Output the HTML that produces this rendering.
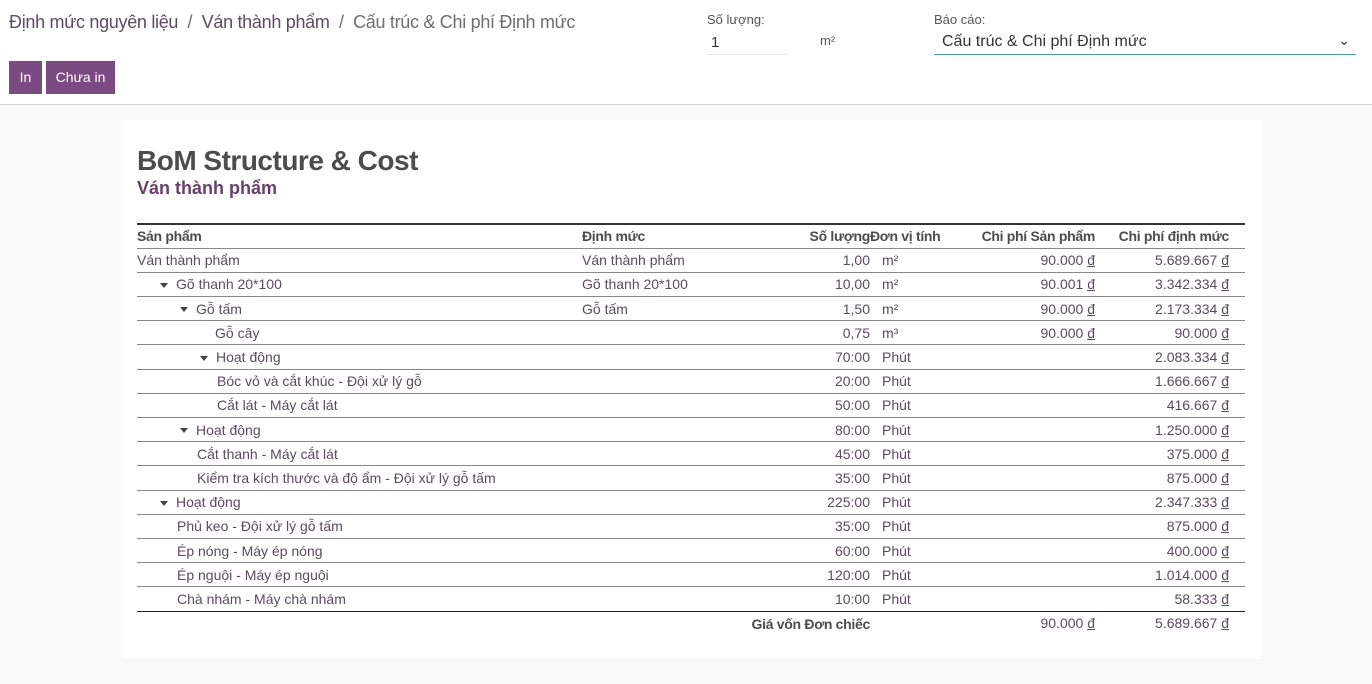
<!DOCTYPE html>
<html><head><meta charset="utf-8">
<style>
*{box-sizing:border-box;margin:0;padding:0}
body{width:1372px;height:684px;overflow:hidden;background:#f9f9f9;font-family:"Liberation Sans",sans-serif;color:#4c4c4c;position:relative}
.top{position:absolute;left:0;top:0;width:1372px;height:105px;background:#fff;border-bottom:1px solid #d8d8d8}
.bc{position:absolute;left:9px;top:12px;font-size:18px;color:#6e6e6e;white-space:nowrap;letter-spacing:-0.3px}
.bc a{color:#5e4a64}
.btn{position:absolute;top:61px;height:33px;background:#7c4a82;color:#fff;font-size:14px;line-height:33px;text-align:center}
.lbl{position:absolute;font-size:13px;color:#555}
.sheet{position:absolute;left:121px;top:120px;width:1140px;height:539px;background:#fff}
h1{position:absolute;left:137px;top:145px;font-size:28px;font-weight:bold;color:#4c4c4c;letter-spacing:-0.5px}
h2{position:absolute;left:137px;top:178px;font-size:18px;font-weight:bold;color:#6b3d6e}
table{position:absolute;left:137px;top:223px;width:1108px;border-collapse:collapse;font-size:14px;border-top:2px solid #333}
td,th{height:24.2px;padding:0;white-space:nowrap;color:#5b4b5e;font-weight:normal}
th{font-weight:bold;color:#4c4c4c;text-align:left;letter-spacing:-0.3px}
tr{border-bottom:1px solid #888}
tr.last{border-bottom:1px solid #222}
tr.tot{border:none}
.r{text-align:right}
.u{padding-left:12px}
.t{display:inline-block;width:0;height:0;border-left:4px solid transparent;border-right:4px solid transparent;border-top:5px solid #444;margin-right:8px;vertical-align:middle}
.d{text-decoration:underline}
</style></head><body>
<div class="top">
<div class="bc"><a>Định mức nguyên liệu</a> &nbsp;/&nbsp; <a>Ván thành phẩm</a> &nbsp;/&nbsp; Cấu trúc &amp; Chi phí Định mức</div>
<div class="btn" style="left:9px;width:33px">In</div>
<div class="btn" style="left:46px;width:69px">Chưa in</div>
<div class="lbl" style="left:707px;top:12px">Số lượng:</div>
<div style="position:absolute;left:707px;top:30px;width:80px;height:25px;border-bottom:1px solid #e4e4e4;font-size:15px;padding:4px 4px;color:#333">1</div>
<div class="lbl" style="left:820px;top:33px">m²</div>
<div class="lbl" style="left:934px;top:12px">Báo cáo:</div>
<div style="position:absolute;left:934px;top:30px;width:422px;height:25px;border-bottom:1px solid #4aa3a0;font-size:16px;padding:3px 8px;color:#333">Cấu trúc &amp; Chi phí Định mức<span style="position:absolute;right:6px;top:2px;font-size:14px">⌄</span></div>
</div>
<div class="sheet"></div>
<h1>BoM Structure &amp; Cost</h1>
<h2>Ván thành phẩm</h2>
<table>
<colgroup><col style="width:445px"><col style="width:210px"><col style="width:78px"><col style="width:100px"><col style="width:125px"><col style="width:134px"><col></colgroup>
<tr><th>Sản phẩm</th><th>Định mức</th><th class="r">Số lượng</th><th>Đơn vị tính</th><th class="r">Chi phí Sản phẩm</th><th class="r">Chi phí định mức</th><th></th></tr>
<tr><td>Ván thành phẩm</td><td>Ván thành phẩm</td><td class="r">1,00</td><td class="u">m²</td><td class="r">90.000 <span class="d">đ</span></td><td class="r">5.689.667 <span class="d">đ</span></td><td></td></tr>
<tr><td style="padding-left:23px"><span class="t"></span>Gõ thanh 20*100</td><td>Gõ thanh 20*100</td><td class="r">10,00</td><td class="u">m²</td><td class="r">90.001 <span class="d">đ</span></td><td class="r">3.342.334 <span class="d">đ</span></td><td></td></tr>
<tr><td style="padding-left:43px"><span class="t"></span>Gỗ tấm</td><td>Gỗ tấm</td><td class="r">1,50</td><td class="u">m²</td><td class="r">90.000 <span class="d">đ</span></td><td class="r">2.173.334 <span class="d">đ</span></td><td></td></tr>
<tr><td style="padding-left:78px">Gỗ cây</td><td></td><td class="r">0,75</td><td class="u">m³</td><td class="r">90.000 <span class="d">đ</span></td><td class="r">90.000 <span class="d">đ</span></td><td></td></tr>
<tr><td style="padding-left:63px"><span class="t"></span>Hoạt động</td><td></td><td class="r">70:00</td><td class="u">Phút</td><td></td><td class="r">2.083.334 <span class="d">đ</span></td><td></td></tr>
<tr><td style="padding-left:80px">Bóc vỏ và cắt khúc - Đội xử lý gỗ</td><td></td><td class="r">20:00</td><td class="u">Phút</td><td></td><td class="r">1.666.667 <span class="d">đ</span></td><td></td></tr>
<tr><td style="padding-left:80px">Cắt lát - Máy cắt lát</td><td></td><td class="r">50:00</td><td class="u">Phút</td><td></td><td class="r">416.667 <span class="d">đ</span></td><td></td></tr>
<tr><td style="padding-left:43px"><span class="t"></span>Hoạt động</td><td></td><td class="r">80:00</td><td class="u">Phút</td><td></td><td class="r">1.250.000 <span class="d">đ</span></td><td></td></tr>
<tr><td style="padding-left:60px">Cắt thanh - Máy cắt lát</td><td></td><td class="r">45:00</td><td class="u">Phút</td><td></td><td class="r">375.000 <span class="d">đ</span></td><td></td></tr>
<tr><td style="padding-left:60px">Kiểm tra kích thước và độ ẩm - Đội xử lý gỗ tấm</td><td></td><td class="r">35:00</td><td class="u">Phút</td><td></td><td class="r">875.000 <span class="d">đ</span></td><td></td></tr>
<tr><td style="padding-left:23px"><span class="t"></span>Hoạt động</td><td></td><td class="r">225:00</td><td class="u">Phút</td><td></td><td class="r">2.347.333 <span class="d">đ</span></td><td></td></tr>
<tr><td style="padding-left:40px">Phủ keo - Đội xử lý gỗ tấm</td><td></td><td class="r">35:00</td><td class="u">Phút</td><td></td><td class="r">875.000 <span class="d">đ</span></td><td></td></tr>
<tr><td style="padding-left:40px">Ép nóng - Máy ép nóng</td><td></td><td class="r">60:00</td><td class="u">Phút</td><td></td><td class="r">400.000 <span class="d">đ</span></td><td></td></tr>
<tr><td style="padding-left:40px">Ép nguội - Máy ép nguội</td><td></td><td class="r">120:00</td><td class="u">Phút</td><td></td><td class="r">1.014.000 <span class="d">đ</span></td><td></td></tr>
<tr class="last"><td style="padding-left:40px">Chà nhám - Máy chà nhám</td><td></td><td class="r">10:00</td><td class="u">Phút</td><td></td><td class="r">58.333 <span class="d">đ</span></td><td></td></tr>
<tr class="tot"><td></td><td></td><td style="position:relative"><b style="position:absolute;right:0;top:4px;color:#4c4c4c;letter-spacing:-0.3px;">Giá vốn Đơn chiếc</b></td><td></td><td class="r">90.000 <span class="d">đ</span></td><td class="r">5.689.667 <span class="d">đ</span></td><td></td></tr>
</table>
</body></html>
